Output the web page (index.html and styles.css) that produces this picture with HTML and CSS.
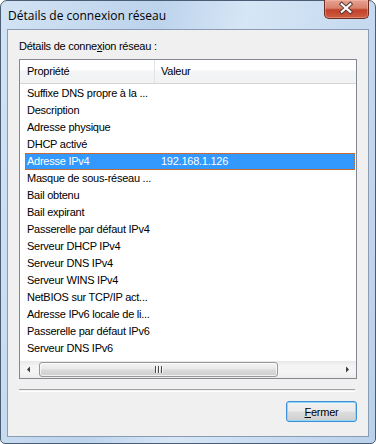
FILE: index.html
```html
<!DOCTYPE html>
<html lang="fr">
<head>
    <meta charset="UTF-8">
    <meta name="viewport" content="width=device-width, initial-scale=1.0">
    <title>Détails de connexion réseau</title>
    <link rel="stylesheet" href="styles.css">
</head>
<body>
    <div class="window">
        <div class="titlebar">
            <span class="title">Détails de connexion réseau</span>
            <button class="close" type="button" aria-label="Fermer">
                <svg width="45" height="19" viewBox="0 0 45 19">
                    <path d="M17.5 5 L26.5 13 M26.5 5 L17.5 13" stroke="#5b3a36" stroke-width="4.2" stroke-linecap="square" fill="none"/>
                    <path d="M17.5 5 L26.5 13 M26.5 5 L17.5 13" stroke="#ffffff" stroke-width="2.2" stroke-linecap="square" fill="none"/>
                </svg>
            </button>
        </div>

        <div class="client">
            <div class="caption">Détails de conne<u>x</u>ion réseau :</div>

            <div class="listview">
                <div class="lv-header">
                    <div class="col col-prop">Propriété</div>
                    <div class="col col-val">Valeur</div>
                </div>
                <div class="lv-body">
                    <div class="row"><span class="cell-prop">Suffixe DNS propre à la ...</span></div>
                    <div class="row"><span class="cell-prop">Description</span></div>
                    <div class="row"><span class="cell-prop">Adresse physique</span></div>
                    <div class="row"><span class="cell-prop">DHCP activé</span></div>
                    <div class="row selected"><span class="cell-prop">Adresse IPv4</span><span class="cell-val">192.168.1.126</span></div>
                    <div class="row"><span class="cell-prop">Masque de sous-réseau ...</span></div>
                    <div class="row"><span class="cell-prop">Bail obtenu</span></div>
                    <div class="row"><span class="cell-prop">Bail expirant</span></div>
                    <div class="row"><span class="cell-prop">Passerelle par défaut IPv4</span></div>
                    <div class="row"><span class="cell-prop">Serveur DHCP IPv4</span></div>
                    <div class="row"><span class="cell-prop">Serveur DNS IPv4</span></div>
                    <div class="row"><span class="cell-prop">Serveur WINS IPv4</span></div>
                    <div class="row"><span class="cell-prop">NetBIOS sur TCP/IP act...</span></div>
                    <div class="row"><span class="cell-prop">Adresse IPv6 locale de li...</span></div>
                    <div class="row"><span class="cell-prop">Passerelle par défaut IPv6</span></div>
                    <div class="row"><span class="cell-prop">Serveur DNS IPv6</span></div>
                </div>
                <div class="hscroll">
                    <div class="arrow">
                        <svg width="17" height="17" viewBox="0 0 17 17"><path d="M7 8.5 L10 5.5 L10 11.5 Z" fill="#3c3c3c"/></svg>
                    </div>
                    <div class="track">
                        <div class="thumb">
                            <span class="grip"></span><span class="grip"></span><span class="grip"></span>
                        </div>
                    </div>
                    <div class="arrow">
                        <svg width="17" height="17" viewBox="0 0 17 17"><path d="M10 8.5 L7 5.5 L7 11.5 Z" fill="#3c3c3c"/></svg>
                    </div>
                </div>
            </div>

            <div class="separator"></div>

            <div class="actions">
                <button class="btn" type="button"><u>F</u>ermer</button>
            </div>
        </div>
    </div>
</body>
</html>
```

FILE: styles.css
```css
body {
    margin: 0;
    padding: 0;
    background: #ffffff;
    font-family: "Liberation Sans", Arial, sans-serif;
    font-size: 11px;
    letter-spacing: -0.25px;
    color: #000;
}
.window {
    width: 376px;
    height: 444px;
    box-sizing: border-box;
    border: 1px solid #4b5d74;
    border-radius: 7px 7px 5px 5px;
    padding: 0 6px 6px 6px;
    background: linear-gradient(100deg, #d2e3f4 0%, #bcd3ec 35%, #d6e6f6 55%, #bad1eb 100%);
    display: flex;
    flex-direction: column;
}
.titlebar {
    height: 28px;
    display: flex;
    justify-content: space-between;
    align-items: flex-start;
}
.title {
    font-family: "Open Sans", "Noto Sans", sans-serif;
    font-size: 12px;
    letter-spacing: 0;
    line-height: 16px;
    padding: 7px 0 0 1px;
    color: #000;
}
.close {
    width: 45px;
    height: 19px;
    margin: -1px 0 0 0;
    padding: 0;
    border: 1px solid #6b2c23;
    border-top: none;
    border-radius: 0 0 5px 5px;
    background: linear-gradient(#e6a292 0%, #d8826c 45%, #c2402a 55%, #cd5e42 100%);
    box-shadow: inset 0 0 0 1px rgba(255, 200, 180, 0.4);
    display: flex;
    align-items: center;
    justify-content: center;
    box-sizing: border-box;
}
.close svg {
    display: block;
    margin-top: -1px;
}
.client {
    height: 408px;
    box-sizing: border-box;
    background: #f0f0f0;
    border: 1px solid #8a9bb3;
    padding: 10px 11px 0 11px;
    display: flex;
    flex-direction: column;
}
.caption {
    line-height: 13px;
    margin-bottom: 6px;
}
.caption u,
.btn u {
    text-decoration-thickness: 1px;
    text-underline-offset: 1px;
}
.listview {
    height: 320px;
    box-sizing: border-box;
    border: 1px solid #828790;
    background: #ffffff;
    display: flex;
    flex-direction: column;
}
.lv-header {
    height: 24px;
    box-sizing: border-box;
    display: flex;
    border-bottom: 1px solid #d5d5d5;
    background: linear-gradient(#ffffff 0%, #ffffff 45%, #f4f5f7 46%, #f1f2f4 100%);
}
.col {
    line-height: 23px;
}
.col-prop {
    width: 135px;
    padding-left: 7px;
    box-sizing: border-box;
    border-right: 1px solid #e2e3e6;
}
.col-val {
    padding-left: 6px;
}
.lv-body {
    flex: 1;
    padding-top: 1px;
}
.row {
    height: 17px;
    line-height: 17px;
    margin: 0 1px 0 5px;
    padding: 0 2px;
    display: flex;
    box-sizing: border-box;
}
.cell-prop {
    width: 134px;
    white-space: nowrap;
}
.row.selected {
    background: #3399ff;
    color: #ffffff;
    outline: 1px dotted #c0632e;
    outline-offset: -1px;
}
.hscroll {
    height: 17px;
    display: flex;
    background: linear-gradient(#e8e8e8, #f4f4f4 30%, #f4f4f4 70%, #ececec);
}
.arrow {
    width: 17px;
    height: 17px;
}
.arrow svg {
    display: block;
}
.track {
    flex: 1;
    padding: 1px 0 1px 2px;
}
.thumb {
    width: 239px;
    height: 15px;
    box-sizing: border-box;
    border: 1px solid #989898;
    border-radius: 3px;
    background: linear-gradient(#f4f4f4 0%, #e9e9e9 45%, #d9d9d9 55%, #cfcfcf 100%);
    box-shadow: inset 0 0 0 1px rgba(255, 255, 255, 0.7);
    display: flex;
    justify-content: center;
    align-items: center;
    gap: 2px;
}
.grip {
    width: 1px;
    height: 7px;
    background: #4d4d4d;
    box-shadow: 1px 0 0 #fafafa;
}
.separator {
    height: 1px;
    margin: 10px 2px 0 0;
    border-top: 1px solid #a0a0a0;
    border-bottom: 1px solid #ffffff;
}
.actions {
    display: flex;
    justify-content: flex-end;
    margin-top: 9px;
}
.btn {
    width: 71px;
    height: 21px;
    padding: 0;
    border: 1px solid #3c8ed6;
    border-radius: 3px;
    background: linear-gradient(#f2f2f2 0%, #ebebeb 48%, #dddddd 52%, #cfcfcf 100%);
    box-shadow: inset 0 0 0 1px #8fd8f8;
    font-family: "Liberation Sans", Arial, sans-serif;
    font-size: 11px;
    letter-spacing: -0.25px;
    color: #000;
}
```
